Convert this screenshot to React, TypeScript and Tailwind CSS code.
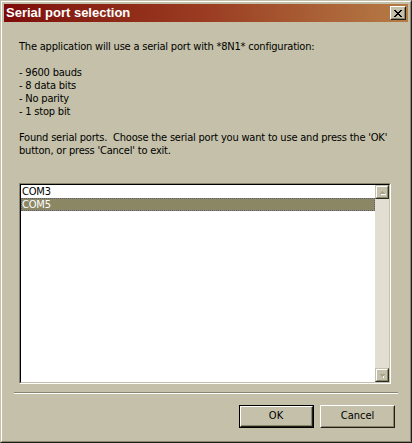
import React from "react";

const FACE = "bg-[#c4c0a9]";

function XGlyph() {
  return (
    <svg width="8" height="7" viewBox="0 0 8 7" shapeRendering="crispEdges">
      <path
        d="M0 0h2v1H0zM6 0h2v1H6zM1 1h2v1H1zM5 1h2v1H5zM2 2h4v1H2zM3 3h2v1H3zM2 4h4v1H2zM1 5h2v1H1zM5 5h2v1H5zM0 6h2v1H0zM6 6h2v1H6z"
        fill="#000"
      />
    </svg>
  );
}

function Arrow({ up }: { up: boolean }) {
  return (
    <svg width="7" height="5" viewBox="0 0 7 5" shapeRendering="crispEdges">
      {up ? (
        <>
          <path d="M3 1h1v1H3zM2 2h3v1H2zM1 3h5v1H1z" fill="#a8a48c" />
          <path d="M2 4h5v1H2z" fill="#ffffff" />
        </>
      ) : (
        <>
          <path d="M1 1h5v1H1zM2 2h3v1H2zM3 3h1v1H3z" fill="#a8a48c" />
          <path d="M4 3h1v1H4zM4 4h1v1H4z" fill="#ffffff" />
        </>
      )}
    </svg>
  );
}

function ScrollButton({ up }: { up: boolean }) {
  return (
    <div className="w-[14px] h-[14px] border-t border-l border-t-[#c4c0a9] border-l-[#c4c0a9] border-r border-b border-r-[#2c2b22] border-b-[#2c2b22]">
      <div className={`w-full h-full ${FACE} border-t border-l border-t-white border-l-white border-r border-b border-r-[#8a866e] border-b-[#8a866e] flex items-center justify-center`}>
        <Arrow up={up} />
      </div>
    </div>
  );
}

export default function App() {
  return (
    <div className="w-[412px] h-[443px] font-['Tahoma','DejaVu_Sans_Condensed','Liberation_Sans',sans-serif] text-[11px] text-black">
      <div className={`w-full h-full ${FACE} border border-t-[#c4c0a9] border-l-[#c4c0a9] border-r-[#1e1e16] border-b-[#1e1e16]`}>
        <div className="w-full h-full border border-t-white border-l-white border-r-[#8a866e] border-b-[#8a866e] p-[2px] flex flex-col">
          {/* Title bar */}
          <div className="h-[18px] shrink-0 bg-linear-to-r from-[#7e0a0a] via-[#9a3c22] to-[#b57c46] flex items-center justify-between pl-[2px] pr-[2px]">
            <span className="text-white font-bold text-[13px] leading-[18px] font-['Liberation_Sans','Arial',sans-serif]">
              Serial port selection
            </span>
            <div className="w-[16px] h-[14px] border border-t-white border-l-white border-r-[#1e1e16] border-b-[#1e1e16]">
              <div className={`w-full h-full ${FACE} border border-t-[#c4c0a9] border-l-[#c4c0a9] border-r-[#8a866e] border-b-[#8a866e] flex items-center justify-center`}>
                <XGlyph />
              </div>
            </div>
          </div>

          {/* Message */}
          <div className="pl-[15px] pt-[18px] leading-[13px] whitespace-pre tracking-[-0.2px]">
            <div>The application will use a serial port with *8N1* configuration:</div>
            <div>&nbsp;</div>
            <div>- 9600 bauds</div>
            <div>- 8 data bits</div>
            <div>- No parity</div>
            <div>- 1 stop bit</div>
            <div>&nbsp;</div>
            <div>Found serial ports.  Choose the serial port you want to use and press the 'OK'</div>
            <div>button, or press 'Cancel' to exit.</div>
          </div>

          {/* Listbox */}
          <div className="ml-[15px] mt-[26px] w-[372px] h-[201px] border border-t-[#8a866e] border-l-[#8a866e] border-r-white border-b-white">
            <div className="w-full h-full border border-t-black border-l-black border-r-[#c4c0a9] border-b-[#c4c0a9] flex">
              <div className="flex-1 bg-white leading-[13px] tracking-[-0.2px]">
                <div className="h-[13px] pl-[1px]">COM3</div>
                <div className="h-[13px] pl-[1px] bg-[#8b8764] text-white outline outline-1 outline-dotted outline-offset-[-1px] outline-[#5e5e78]">COM5</div>
              </div>
              <div className="w-[14px] bg-[#e2dfd2] flex flex-col justify-between">
                <ScrollButton up />
                <ScrollButton up={false} />
              </div>
            </div>
          </div>

          {/* Separator */}
          <div className="ml-[10px] mt-[8px] w-[384px] border-t border-b border-t-[#8a866e] border-b-white" />

          {/* Buttons */}
          <div className="flex justify-end gap-[6px] pr-[13px] mt-[11px]">
            <div className="w-[75px] h-[23px] border border-black">
              <div className={`w-full h-full ${FACE} border border-t-white border-l-white border-r-[#1e1e16] border-b-[#1e1e16]`}>
                <div className="w-full h-full border-r border-b border-r-[#8a866e] border-b-[#8a866e] flex items-center justify-center">
                  OK
                </div>
              </div>
            </div>
            <div className="w-[75px] h-[23px] border border-t-white border-l-white border-r-[#1e1e16] border-b-[#1e1e16]">
              <div className={`w-full h-full ${FACE} border border-t-[#c4c0a9] border-l-[#c4c0a9] border-r-[#8a866e] border-b-[#8a866e] flex items-center justify-center`}>
                Cancel
              </div>
            </div>
          </div>
        </div>
      </div>
    </div>
  );
}
